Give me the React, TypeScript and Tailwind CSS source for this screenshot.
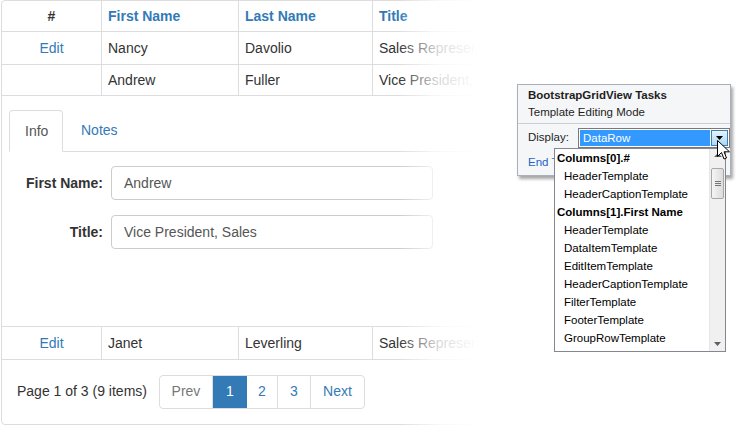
import React from 'react'

const font = { fontFamily: '"Liberation Sans", Arial, sans-serif' }

function Cell({ w, children, className = '' }: { w: string; children?: React.ReactNode; className?: string }) {
  return <div className={`${w} shrink-0 flex items-center border-r border-[#ddd] px-[6px] ${className}`}>{children}</div>
}

function Row({ h, a, b, c, d, head = false }: { h: string; a?: string; b: string; c: string; d: string; head?: boolean }) {
  const txt = head ? 'font-bold text-[#337ab7]' : 'text-[#333]'
  return (
    <div className={`flex ${h} border-b border-[#ddd]`}>
      <Cell w="w-[100px]" className={`justify-center ${head ? 'font-bold text-[#333]' : 'text-[#337ab7]'}`}>{a}</Cell>
      <Cell w="w-[137px]" className={txt}>{b}</Cell>
      <Cell w="w-[134px]" className={txt}>{c}</Cell>
      <div className={`flex-1 flex items-center px-[6px] whitespace-nowrap ${txt}`}>{d}</div>
    </div>
  )
}

function Grid() {
  return (
    <div className="relative w-[490px] shrink-0 overflow-hidden pl-px" style={font}>
      <div className="w-[520px] h-[425px] border border-[#ddd] rounded-[4px] text-[14px] flex flex-col">
        <Row h="h-[31px]" a="#" b="First Name" c="Last Name" d="Title" head />
        <Row h="h-[33px]" a="Edit" b="Nancy" c="Davolio" d="Sales Representative" />
        <Row h="h-[31px]" b="Andrew" c="Fuller" d="Vice President, Sales" />
        <div className="h-[231px] border-b border-[#ddd] pt-[14px] pl-[7px]">
          <div className="flex border-b border-[#ddd] h-[42px]">
            <div className="w-[54px] h-[42px] -mb-px border border-[#ddd] border-b-white rounded-t-[4px] bg-white flex items-center pl-[15px] text-[#555]">Info</div>
            <div className="ml-[2px] h-[41px] flex items-center px-[16px] text-[#337ab7]">Notes</div>
          </div>
          <div className="mt-[14px] flex flex-col gap-[15px]">
            <div className="flex items-center">
              <div className="w-[94px] text-right font-bold text-[#333]">First Name:</div>
              <div className="ml-[8px] w-[322px] h-[34px] border border-[#ccc] rounded-[4px] flex items-center px-[12px] text-[#555]">Andrew</div>
            </div>
            <div className="flex items-center">
              <div className="w-[94px] text-right font-bold text-[#333]">Title:</div>
              <div className="ml-[8px] w-[322px] h-[34px] border border-[#ccc] rounded-[4px] flex items-center px-[12px] text-[#555]">Vice President, Sales</div>
            </div>
          </div>
        </div>
        <Row h="h-[33px]" a="Edit" b="Janet" c="Leverling" d="Sales Representative" />
        <div className="flex-1 flex items-center pl-[15px] pb-px">
          <span className="text-[#333]">Page 1 of 3 (9 items)</span>
          <div className="ml-[12px] flex h-[34px] border border-[#ddd] rounded-[4px] overflow-hidden">
            <div className="w-[53px] flex items-center justify-center text-[#777] border-r border-[#ddd]">Prev</div>
            <div className="w-[34px] flex items-center justify-center bg-[#337ab7] text-white">1</div>
            <div className="w-[31px] flex items-center justify-center text-[#337ab7] border-r border-[#ddd]">2</div>
            <div className="w-[33px] flex items-center justify-center text-[#337ab7] border-r border-[#ddd]">3</div>
            <div className="w-[53px] flex items-center justify-center text-[#337ab7]">Next</div>
          </div>
        </div>
      </div>
      <div className="absolute top-0 left-[398px] w-[80px] h-full bg-gradient-to-r from-white/0 via-white/80 to-white" />
      <div className="absolute top-0 left-[477px] w-[13px] h-full bg-white" />
    </div>
  )
}

const items: [string, boolean][] = [
  ['Columns[0].#', true],
  ['HeaderTemplate', false],
  ['HeaderCaptionTemplate', false],
  ['Columns[1].First Name', true],
  ['HeaderTemplate', false],
  ['DataItemTemplate', false],
  ['EditItemTemplate', false],
  ['HeaderCaptionTemplate', false],
  ['FilterTemplate', false],
  ['FooterTemplate', false],
  ['GroupRowTemplate', false],
]

function DropList() {
  return (
    <div className="absolute left-[-25px] top-[19px] w-[172px] h-[204px] bg-white border border-[#828790] flex z-10">
      <div className="flex-1 overflow-hidden">
        {items.map(([t, bold], i) => (
          <div key={i} className={`h-[18px] leading-[18px] whitespace-nowrap text-black ${bold ? 'font-bold pl-[2px]' : 'pl-[9px]'}`}>{t}</div>
        ))}
      </div>
      <div className="w-[16px] bg-[#f0f0f0] border-l border-[#e6e6e6] relative">
        <svg className="absolute left-[4px] top-[3px]" width="8" height="5" viewBox="0 0 8 5"><path d="M0 5 L4 1 L8 5 Z" fill="#606060" /></svg>
        <div className="absolute left-[1px] top-[19px] w-[13px] h-[31px] border border-[#a7a7a7] rounded-[2px] bg-gradient-to-r from-[#f5f5f5] to-[#dcdcdc] flex flex-col items-center justify-center gap-[1px]">
          <div className="w-[6px] h-px bg-[#777]" />
          <div className="w-[6px] h-px bg-[#777]" />
          <div className="w-[6px] h-px bg-[#777]" />
        </div>
        <svg className="absolute left-[4px] bottom-[5px]" width="7" height="4" viewBox="0 0 7 4"><path d="M0 0 L7 0 L3.5 4 Z" fill="#606060" /></svg>
      </div>
    </div>
  )
}

function Cursor() {
  return (
    <svg className="absolute left-[138px] top-[11px] z-20" width="13" height="21" viewBox="0 0 13 21">
      <path d="M0.5 0.5 L0.5 16.5 L4.5 12.5 L7 19 L9.5 18 L7 11.8 L12.5 11.8 Z" fill="white" stroke="black" strokeWidth="1" strokeLinejoin="miter" />
    </svg>
  )
}

function TaskPanel() {
  return (
    <div className="ml-[27px] mt-[84px] w-[214px] h-[92px] bg-[#f5f6f7] border border-[#a9b0bb] shadow-[2px_3px_3px_rgba(0,0,0,0.35)] text-[11.5px] text-[#1e1e1e] self-start" style={font}>
      <div className="pl-[10px] pt-[2px] pb-[2px] border-b border-[#c9ced6]">
        <div className="h-[17px] leading-[17px] font-bold">BootstrapGridView Tasks</div>
        <div className="h-[17px] leading-[17px]">Template Editing Mode</div>
      </div>
      <div className="pl-[10px] pt-[4px]">
        <div className="flex items-center h-[20px]">
          <span className="w-[50px]">Display:</span>
          <div className="relative w-[152px] h-[20px] border border-[#7a7a7a] bg-white p-px flex">
            <div className="flex-1 bg-[#3399ff] text-white pl-[3px] leading-[16px]">DataRow</div>
            <div className="w-[17px] ml-px border border-[#3c7fb1] bg-gradient-to-b from-[#e5f4fc] to-[#a7d9f5] flex items-center justify-center">
              <svg width="7" height="4" viewBox="0 0 7 4"><path d="M0 0 L7 0 L3.5 4 Z" fill="black" /></svg>
            </div>
            <DropList />
            <Cursor />
          </div>
        </div>
        <div className="mt-[6px] h-[17px] leading-[17px] w-[26px] overflow-hidden whitespace-nowrap text-[#1e63c9]">End Template Editing</div>
      </div>
    </div>
  )
}

export default function App() {
  return (
    <div className="w-[736px] h-[427px] bg-white flex overflow-hidden">
      <Grid />
      <TaskPanel />
    </div>
  )
}
